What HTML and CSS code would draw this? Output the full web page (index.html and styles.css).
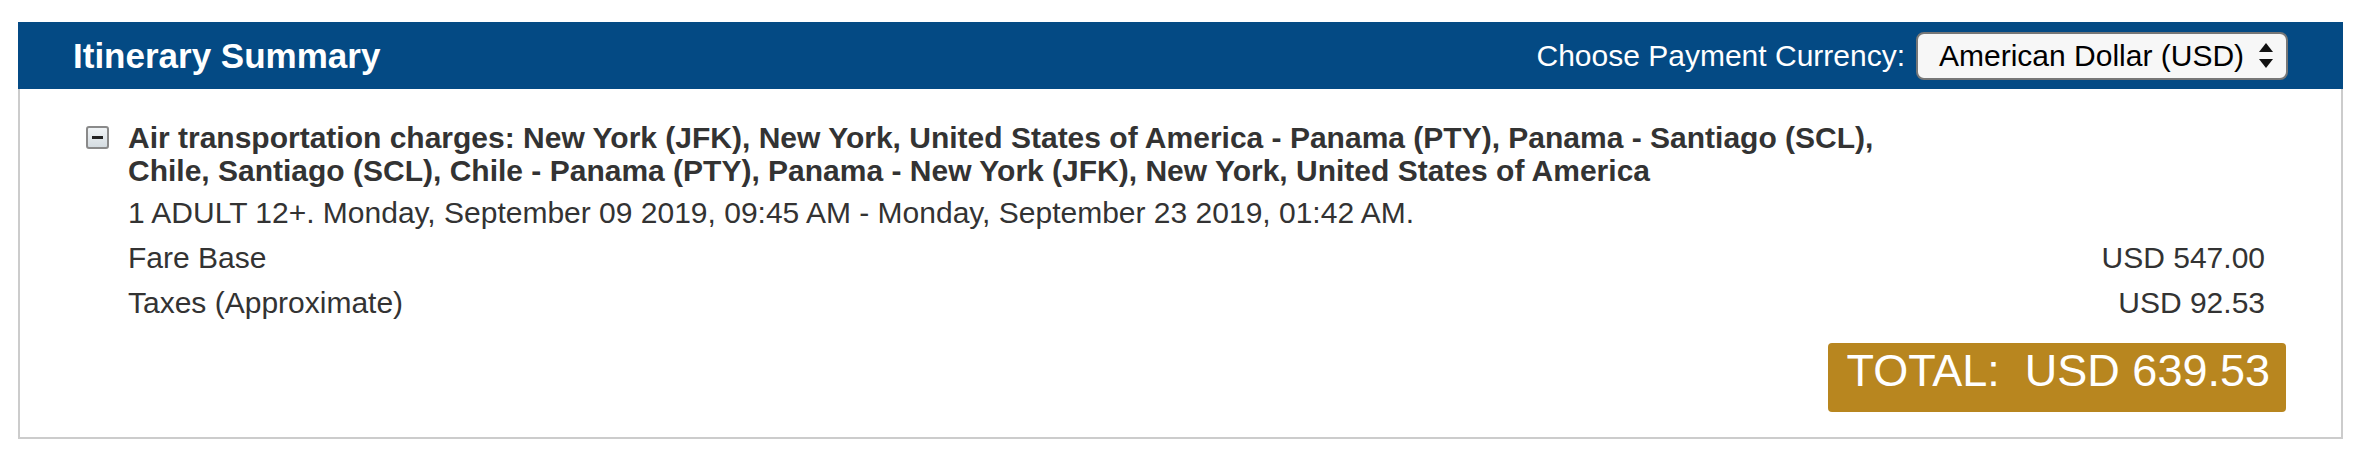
FILE: index.html
```html
<!DOCTYPE html>
<html lang="en">
<head>
    <meta charset="UTF-8">
    <title>Itinerary Summary</title>
    <link rel="stylesheet" href="styles.css">
</head>
<body>
    <div class="summary">
        <div class="summary-header">
            <h1>Itinerary Summary</h1>
            <div class="currency">
                <label for="currency">Choose Payment Currency:</label>
                <div class="currency-select" id="currency">
                    <span>American Dollar (USD)</span>
                    <svg class="select-arrows" width="14" height="26" viewBox="0 0 14 26">
                        <path d="M7 0 L14 9 L0 9 Z" fill="#111"/>
                        <path d="M0 16 L14 16 L7 25 Z" fill="#111"/>
                    </svg>
                </div>
            </div>
        </div>

        <div class="summary-body">
            <div class="route">
                <span class="toggle">
                    <svg width="23" height="23" viewBox="0 0 23 23">
                        <defs>
                            <linearGradient id="tg" x1="0" y1="0" x2="0" y2="1">
                                <stop offset="0" stop-color="#f2f5f7"/>
                                <stop offset="1" stop-color="#d3dbe0"/>
                            </linearGradient>
                        </defs>
                        <rect x="1" y="1" width="21" height="21" rx="2" fill="url(#tg)" stroke="#8a8a8a" stroke-width="2"/>
                        <rect x="6" y="10" width="11" height="3" fill="#222"/>
                    </svg>
                </span>
                <div class="route-title">Air transportation charges: New York (JFK), New York, United States of America - Panama (PTY), Panama - Santiago (SCL), Chile, Santiago (SCL), Chile - Panama (PTY), Panama - New York (JFK), New York, United States of America</div>
            </div>

            <div class="row">1 ADULT 12+. Monday, September 09 2019, 09:45 AM - Monday, September 23 2019, 01:42 AM.</div>
            <div class="row">
                <span>Fare Base</span>
                <span>USD 547.00</span>
            </div>
            <div class="row">
                <span>Taxes (Approximate)</span>
                <span>USD 92.53</span>
            </div>

            <div class="total-wrap">
                <div class="total">TOTAL:&nbsp; USD 639.53</div>
            </div>
        </div>
    </div>
</body>
</html>
```

FILE: styles.css
```css
body {
    margin: 0;
    background-color: #fff;
    font-family: "Liberation Sans", Arial, sans-serif;
    color: #333;
}
.summary {
    width: 2325px;
    margin: 22px 0 0 18px;
}
.summary-header {
    display: flex;
    align-items: center;
    justify-content: space-between;
    height: 67px;
    padding: 0 55px;
    background-color: #044a84;
}
.summary-header h1 {
    margin: 0;
    font-size: 35px;
    font-weight: bold;
    color: #fff;
}
.currency {
    display: flex;
    align-items: center;
}
.currency label {
    margin-right: 11px;
    font-size: 30px;
    color: #fff;
}
.currency-select {
    display: flex;
    align-items: center;
    justify-content: space-between;
    box-sizing: border-box;
    width: 372px;
    height: 48px;
    padding: 0 13px 0 21px;
    border: 2px solid #777;
    border-radius: 8px;
    background-color: #f7f7f7;
    font-size: 30px;
    color: #000;
}
.summary-body {
    padding: 32px 76px 25px 0;
    border: 2px solid #ccc;
    border-top: none;
}
.route {
    display: flex;
    align-items: flex-start;
    padding-left: 66px;
}
.toggle {
    display: flex;
    margin: 5px 19px 0 0;
}
.route-title {
    max-width: 1800px;
    font-size: 30px;
    font-weight: bold;
    line-height: 33px;
}
.row {
    display: flex;
    justify-content: space-between;
    padding-left: 108px;
    font-size: 30px;
    line-height: 45px;
}
.route + .row {
    margin-top: 3px;
}
.total-wrap {
    display: flex;
    justify-content: flex-end;
    margin: 18px -21px 0 0;
}
.total {
    padding: 5px 16px 19px 18px;
    border-radius: 4px;
    background-color: #b8861f;
    font-size: 45px;
    line-height: 45px;
    color: #fff;
}
```
